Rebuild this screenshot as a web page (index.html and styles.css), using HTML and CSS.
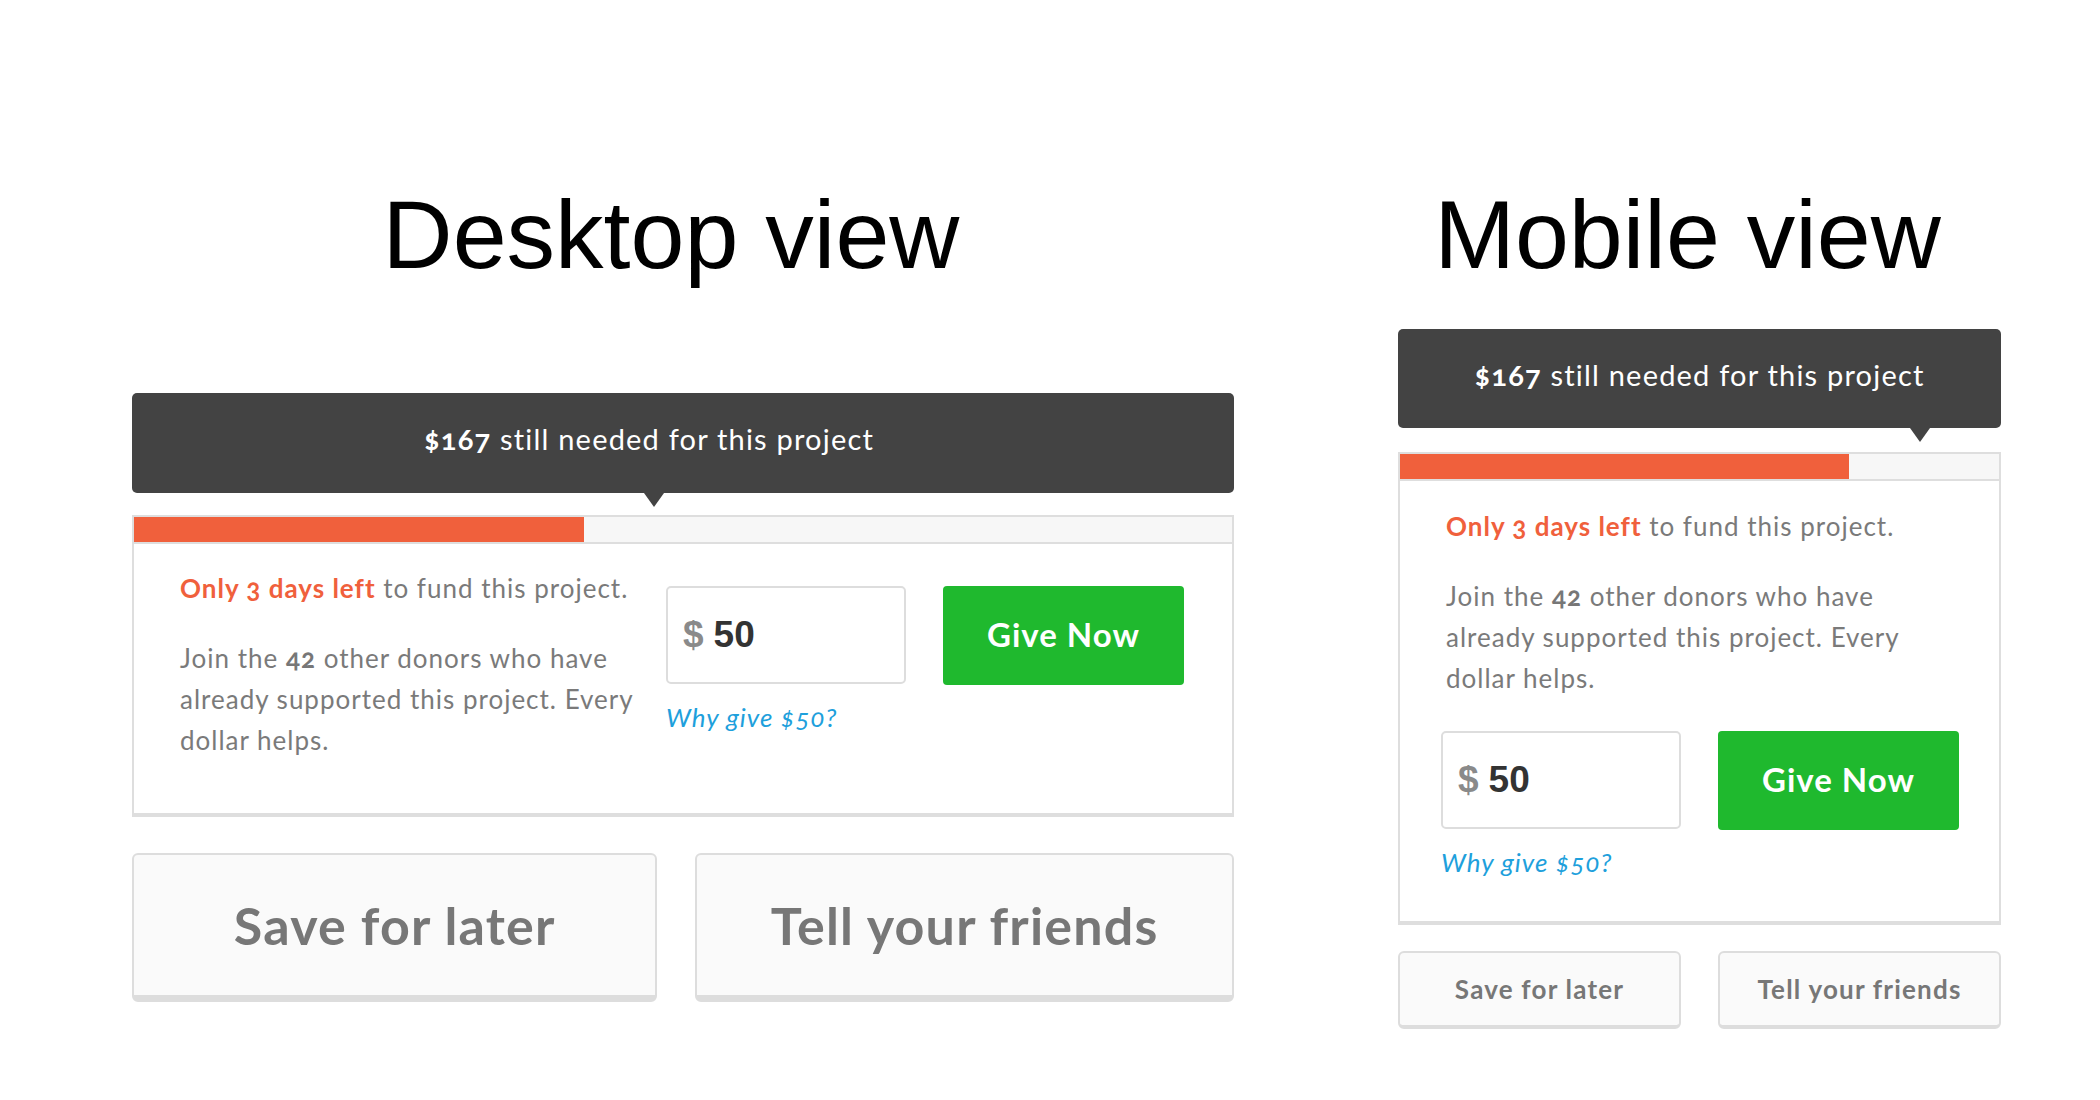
FILE: index.html
```html
<!DOCTYPE html>
<html lang="en">
<head>
<meta charset="utf-8">
<title>Desktop and mobile donation views</title>
<link rel="stylesheet" href="styles.css">
</head>
<body>
<div class="page">
  <section class="panel desktop">
    <h1 class="title">Desktop view</h1>
    <div class="banner"><span class="banner-text"><b>$167</b> still needed for this project</span></div>
    <div class="card">
      <div class="progress"><div class="fill" style="width:41%"></div></div>
      <div class="card-body">
        <div class="info">
          <p class="urgency"><span class="hl">Only 3 days left</span> to fund this project.</p>
          <p class="donors">Join the <b>42</b> other donors who have already supported this project. Every dollar helps.</p>
        </div>
        <div class="give">
          <div class="amount-field">
            <div class="amount"><span class="cur">$</span><span class="val">50</span></div>
            <a class="why" href="#">Why give $50?</a>
          </div>
          <button class="give-btn" type="button">Give Now</button>
        </div>
      </div>
    </div>
    <div class="actions">
      <button class="secondary" type="button">Save for later</button>
      <button class="secondary" type="button">Tell your friends</button>
    </div>
  </section>

  <section class="panel mobile">
    <h1 class="title">Mobile view</h1>
    <div class="banner"><span class="banner-text"><b>$167</b> still needed for this project</span></div>
    <div class="card">
      <div class="progress"><div class="fill" style="width:75%"></div></div>
      <div class="card-body">
        <div class="info">
          <p class="urgency"><span class="hl">Only 3 days left</span> to fund this project.</p>
          <p class="donors">Join the <b>42</b> other donors who have already supported this project. Every dollar helps.</p>
        </div>
        <div class="give">
          <div class="amount-field">
            <div class="amount"><span class="cur">$</span><span class="val">50</span></div>
            <a class="why" href="#">Why give $50?</a>
          </div>
          <button class="give-btn" type="button">Give Now</button>
        </div>
      </div>
    </div>
    <div class="actions">
      <button class="secondary" type="button">Save for later</button>
      <button class="secondary" type="button">Tell your friends</button>
    </div>
  </section>
</div>
</body>
</html>
```

FILE: styles.css
```css
* { box-sizing: border-box; }

html, body {
  margin: 0;
  padding: 0;
  background: #ffffff;
}

body {
  font-family: "Lato", "Open Sans", "Noto Sans", sans-serif;
  font-feature-settings: "onum" 1;
  color: #7a7a7a;
}

.page {
  display: flex;
  align-items: flex-start;
  gap: 164px;
  padding: 180px 0 0 132px;
}

.panel { display: flex; flex-direction: column; }
.desktop { width: 1102px; }
.mobile { width: 603px; }

.title {
  margin: 0;
  padding-right: 24px;
  font-family: "Liberation Sans", Arial, sans-serif;
  font-weight: 400;
  font-size: 97px;
  line-height: 110px;
  color: #000;
  text-align: center;
}

/* Dark banner with pointer */
.banner {
  position: relative;
  display: flex;
  align-items: center;
  justify-content: center;
  background: #434343;
  border-radius: 5px;
  color: #fff;
  font-size: 29px;
  letter-spacing: 1.2px;
  padding-bottom: 9px;
}
.banner::after {
  content: "";
  position: absolute;
  left: 512px;
  top: 100%;
  border-left: 10px solid transparent;
  border-right: 10px solid transparent;
  border-top: 14px solid #434343;
}
.banner b { font-weight: 700; }
.desktop .banner { margin-top: 103px; height: 100px; padding-right: 68px; }
.mobile .banner { margin-top: 39px; height: 99px; }

/* Card */
.card {
  background: #fff;
  border: 2px solid #dedede;
  border-bottom-width: 4px;
}
.desktop .card { margin-top: 22px; }
.mobile .card { margin-top: 24px; }

.progress {
  height: 27px;
  background: #f7f7f7;
  border-bottom: 2px solid #dedede;
}
.fill { height: 25px; background: #f0603c; }

.info p {
  margin: 0;
  font-size: 26px;
  line-height: 41px;
  letter-spacing: 1px;
}
.info .donors { margin-top: 29px; }
.info b { font-weight: 700; color: #777; }
.hl { color: #f0603c; font-weight: 700; }

.amount {
  display: flex;
  align-items: center;
  gap: 10px;
  width: 240px;
  height: 98px;
  padding-left: 15px;
  border: 2px solid #dddddd;
  border-radius: 5px;
  background: #fff;
  font-family: "Liberation Sans", Arial, sans-serif;
  font-weight: 700;
  font-size: 37px;
}
.cur { color: #8a8a8a; }
.val { color: #333; }

.why {
  display: block;
  margin-top: 13px;
  font-size: 26px;
  line-height: 41px;
  letter-spacing: 1px;
  font-style: italic;
  color: #1ea0dc;
  text-decoration: none;
}

.give-btn {
  width: 241px;
  height: 99px;
  padding: 0 0 4px;
  border: none;
  border-radius: 4px;
  background: #1fb92e;
  color: #fff;
  font-family: inherit;
  font-weight: 700;
  font-size: 33px;
  letter-spacing: 1px;
  cursor: pointer;
}

.desktop .card-body {
  display: flex;
  align-items: flex-start;
  padding: 24px 48px 52px 46px;
}
.desktop .info { width: 458px; flex: 0 0 458px; margin-right: 28px; }
.desktop .give { display: flex; align-items: flex-start; gap: 37px; margin-top: 18px; }

.mobile .card-body { padding: 25px 40px 38px 41px; }
.mobile .info { width: 463px; padding-left: 5px; }
.mobile .give { display: flex; align-items: flex-start; gap: 37px; margin-top: 32px; }

/* Secondary actions */
.actions { display: grid; }
.desktop .actions { grid-template-columns: 525fr 538fr; gap: 38px; margin-top: 36px; }
.mobile .actions { grid-template-columns: 1fr 1fr; gap: 37px; margin-top: 26px; }

.secondary {
  background: #fafafa;
  border: 2px solid #dddddd;
  border-radius: 6px;
  color: #777;
  font-family: inherit;
  font-weight: 700;
  cursor: pointer;
}
.desktop .secondary { height: 149px; font-size: 52px; letter-spacing: 1.2px; border-bottom-width: 7px; }
.mobile .secondary { height: 78px; font-size: 26px; letter-spacing: 1.2px; border-bottom-width: 4px; }
```
